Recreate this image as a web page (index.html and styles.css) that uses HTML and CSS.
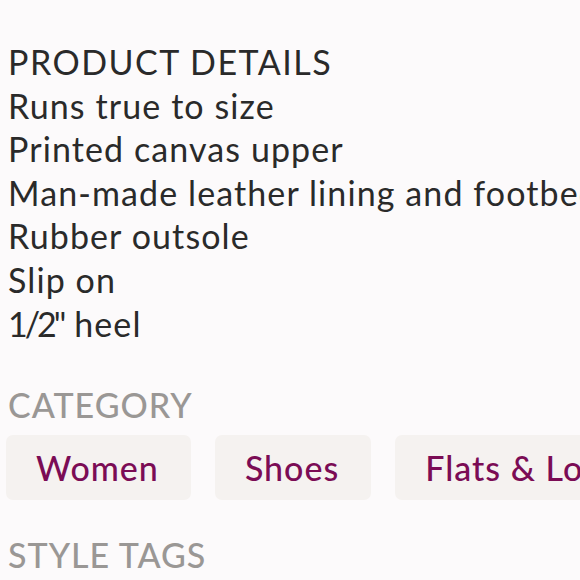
FILE: index.html
```html
<!DOCTYPE html>
<html>
<head>
<meta charset="utf-8">
<link rel="stylesheet" href="styles.css">
</head>
<body>
<div class="page">
  <section class="details">
    <h2 class="details-title">PRODUCT DETAILS</h2>
    <p class="line">Runs true to size</p>
    <p class="line">Printed canvas upper</p>
    <p class="line">Man-made leather lining and footbed</p>
    <p class="line">Rubber outsole</p>
    <p class="line">Slip on</p>
    <p class="line"><span class="frac">1/2"</span> heel</p>
  </section>
  <section class="category">
    <h3 class="label">CATEGORY</h3>
    <div class="chips">
      <span class="chip">Women</span>
      <span class="chip">Shoes</span>
      <span class="chip">Flats &amp; Loafers</span>
    </div>
  </section>
  <section class="tags">
    <h3 class="label">STYLE TAGS</h3>
  </section>
</div>
</body>
</html>
```
FILE: styles.css
```css
html, body {
  margin: 0;
  padding: 0;
  background: #fcfafb;
  overflow: hidden;
}
.page {
  width: 580px;
  height: 580px;
  overflow: hidden;
  font-family: Lato, "Noto Sans", sans-serif;
  padding: 40px 0 0 6px;
  box-sizing: border-box;
}
.details {
  padding-left: 2px;
  color: #2a2a2a;
  line-height: 43.6px;
  white-space: nowrap;
}
.details-title, .line {
  margin: 0;
  font-size: 34px;
  font-weight: 400;
  letter-spacing: 1.1px;
}
.details-title {
  letter-spacing: 1.5px;
}
.frac {
  letter-spacing: -3px;
  margin-right: 1px;
}
.label {
  margin: 0;
  padding-left: 2px;
  font-size: 34px;
  line-height: 43px;
  font-weight: 500;
  letter-spacing: 1px;
  color: #9a9795;
}
.category {
  margin-top: 38px;
}
.chips {
  display: flex;
  gap: 24px;
  margin-top: 9px;
  white-space: nowrap;
}
.chip {
  flex: none;
  height: 65px;
  display: flex;
  align-items: center;
  padding: 0 32px 0 30px;
  background: #f5f2f0;
  border-radius: 7px;
  color: #7b0c55;
  font-size: 34px;
  font-weight: 500;
  letter-spacing: 1px;
}
.tags {
  margin-top: 33px;
}
```
